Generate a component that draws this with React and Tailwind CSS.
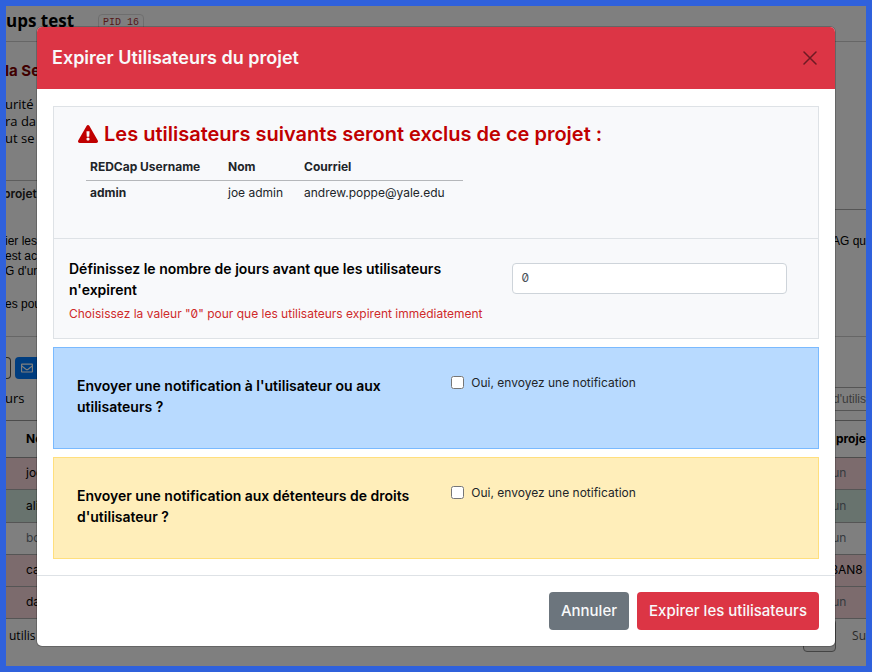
import React from "react";
import { FaExclamationTriangle, FaRegEnvelope } from "react-icons/fa";

const users = [
  { name: "joe", dag: "Aucun", row: "h-8 bg-[#f8d7da]" },
  { name: "alice", dag: "Aucun", row: "h-[33px] bg-[#d1e7dd]" },
  { name: "bob", dag: "Aucun", row: "h-8 bg-white text-[#6c757d]" },
  { name: "carol", dag: "AG BAN8", row: "h-8 bg-[#f8d7da]" },
  { name: "dave", dag: "Aucun", row: "h-8 bg-[#f8d7da]" },
];

function Page() {
  return (
    <div className="h-full overflow-hidden bg-white font-['Open_Sans','Noto_Sans',sans-serif] text-[13px] whitespace-nowrap text-black">
      <header className="flex h-9 items-start gap-6 border-b border-[#ccc]">
        <h1 className="text-[17px] leading-[30px] font-bold">ups test</h1>
        <span className="mt-2 rounded border border-[#ddd] px-1 font-['Liberation_Mono',monospace] text-[10px] leading-4 text-[#a33]">PID 16</span>
      </header>
      <section className="h-[138px] pt-[17px]">
        <h2 className="-ml-px font-['Inter',sans-serif] text-[15px] leading-6 font-bold text-[#800000]">la Se</h2>
        <p className="-ml-px pt-[13px] leading-[17px]">urité<br />ra da<br />ut se v</p>
      </section>
      <nav className="flex h-[30px]">
        <a href="#projet" className="-ml-[3px] w-32 border-t border-[#bbb] pt-1 font-['Inter',sans-serif] text-[12px] font-semibold text-[#222]">projet</a>
        <span className="flex-1 border-b border-[#aaa]" />
      </nav>
      <section className="flex h-[127px] justify-between border-b border-[#ccc] pt-6 font-['Liberation_Sans',sans-serif] text-[12px] leading-[15px]">
        <div className="-ml-px">
          <p>ier les<br />est ac<br />G d'un</p>
          <p className="pt-[18px]">es pou</p>
        </div>
        <p>AG qu</p>
      </section>
      <div className="flex h-[50px] gap-1 pt-5">
        <button className="h-[22px] w-[5px] rounded-r border border-l-0 border-[#555]" aria-label="Importer" />
        <button className="flex h-[22px] w-20 items-center rounded bg-[#007bff] pl-[6px] text-white" aria-label="Courriel"><FaRegEnvelope size={12} /></button>
      </div>
      <div className="flex h-[33px] items-start justify-between">
        <span className="-ml-px pt-[2px]">urs</span>
        <input aria-label="Rechercher" placeholder="d'utilis" className="h-6 w-[35px] border-y border-[#aaa] pl-[2px] font-['Liberation_Sans',sans-serif] text-[12px] placeholder:text-[#777]" />
      </div>
      <table className="w-full table-fixed border-collapse border-y border-[#999] text-left font-['Inter',sans-serif] text-[12px]">
        <thead>
          <tr className="h-[37px] border-b border-[#999]"><th className="pb-px pl-5">Nom</th><th className="w-14 pb-px pl-2">du proje</th></tr>
        </thead>
        <tbody>
          {users.map((u) => (
            <tr key={u.name} className={`border-b border-[#aaa] ${u.row}`}>
              <td className="pb-px pl-5">{u.name}</td>
              <td className={u.dag === "Aucun" ? "pb-px text-[#6c757d]" : "pb-px"}>{u.dag}</td>
            </tr>
          ))}
        </tbody>
      </table>
      <footer className="flex justify-between text-[12px]">
        <span className="pt-2 pl-[3px]">utilis</span>
        <span className="flex gap-4">
          <button className="h-[33px] w-[33px] rounded-sm border border-[#888] bg-[#eee]" aria-label="Page" />
          <span className="pt-2 text-[#555]">Su</span>
        </span>
      </footer>
    </div>
  );
}

function Notice({ id, title, tone }) {
  return (
    <section className={`mt-2 flex border pt-[27px] pb-[31px] ${tone}`}>
      <h3 className="w-[52%] pr-8 pl-[23px] text-[14px] leading-[21px] font-semibold text-black">{title}</h3>
      <div className="flex h-[15px] items-center gap-[7px]">
        <input id={id} type="checkbox" className="size-[13px]" />
        <label htmlFor={id} className="text-[12px] text-[#212529]">Oui, envoyez une notification</label>
      </div>
    </section>
  );
}

function ExpireDialog() {
  return (
    <div role="dialog" aria-labelledby="title" className="absolute inset-x-[31px] top-[21px] rounded-[5px] bg-white font-['Inter',sans-serif] text-[#212529] shadow-[0_0_0_1px_rgba(0,0,0,0.2)]">
      <header className="flex h-[62px] items-center justify-between rounded-t-[5px] bg-[#dc3545] px-[15px]">
        <h1 id="title" className="pb-[2px] text-[18px] font-semibold text-[#f8f9fa]">Expirer Utilisateurs du projet</h1>
        <button aria-label="Fermer" className="mr-[3px] text-[#6f1a23]">
          <svg width="14" height="14" viewBox="0 0 14 14" stroke="currentColor" strokeWidth="1.5" strokeLinecap="round"><path d="M1 1L13 13M13 1L1 13" /></svg>
        </button>
      </header>
      <div className="px-4 pt-[17px] pb-4">
        <div className="border border-[#dee2e6] bg-[#f8f9fb]">
          <section className="border-b border-[#dee2e6] px-6 pt-3 pb-8">
            <h2 className="flex items-center gap-[6px] text-[20px] leading-[30px] font-semibold text-[#c00000]">
              <FaExclamationTriangle size={20} />
              <span>Les utilisateurs suivants seront exclus de ce projet :</span>
            </h2>
            <table className="mt-1 ml-2 w-[377px] table-fixed border-collapse text-left text-[12px]">
              <thead>
                <tr className="h-[27px] border-b border-[#b5b7ba]"><th className="w-[138px] px-1 pt-px">REDCap Username</th><th className="w-[76px] px-1 pt-px">Nom</th><th className="px-1 pt-px">Courriel</th></tr>
              </thead>
              <tbody>
                <tr className="h-[26px]"><th className="px-1">admin</th><td className="px-1">joe admin</td><td className="px-1">andrew.poppe@yale.edu</td></tr>
              </tbody>
            </table>
          </section>
          <section className="flex pt-[19px] pb-[14px]">
            <div className="w-[60%] pl-[15px]">
              <label htmlFor="days" className="block pr-12 text-[14px] leading-[21px] font-semibold text-black">Définissez le nombre de jours avant que les utilisateurs n'expirent</label>
              <p className="mt-1 text-[12px] leading-5 text-[#cf2a2a] [font-feature-settings:'zero']">Choisissez la valeur "0" pour que les utilisateurs expirent immédiatement</p>
            </div>
            <input id="days" type="text" defaultValue="0" className="mt-[5px] h-[31px] w-[36%] rounded border border-[#ced4da] bg-white px-2 pb-[2px] text-[12px] text-[#495057] [font-feature-settings:'zero']" />
          </section>
        </div>
        <Notice id="notify-users" title="Envoyer une notification à l'utilisateur ou aux utilisateurs ?" tone="border-[#7abaff] bg-[#b8daff]" />
        <Notice id="notify-holders" title="Envoyer une notification aux détenteurs de droits d'utilisateur ?" tone="border-[#ffdf7e] bg-[#ffeeba]" />
      </div>
      <footer className="flex justify-end gap-2 border-t border-[#dee2e6] p-4 text-[15px] font-medium text-[#f8f9fa]">
        <button className="h-[38px] rounded bg-[#6c757d] px-3">Annuler</button>
        <button className="h-[38px] rounded bg-[#dc3545] px-3">Expirer les utilisateurs</button>
      </footer>
    </div>
  );
}

export default function App() {
  return (
    <main className="relative h-screen min-h-[672px] border-[6px] border-[#2f61dc]">
      <Page />
      <div className="absolute inset-0 bg-black/50" />
      <ExpireDialog />
    </main>
  );
}
